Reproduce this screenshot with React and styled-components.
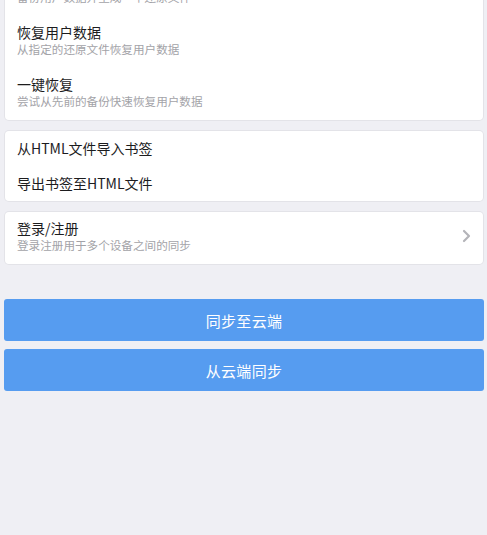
import React from 'react';
import styled, { createGlobalStyle } from 'styled-components';

const GlobalStyle = createGlobalStyle`
  html, body {
    margin: 0;
    padding: 0;
    background: #efeff4;
    font-family: "Noto Sans CJK SC", "Noto Sans", sans-serif;
    -webkit-font-smoothing: antialiased;
  }
`;

// Page is scrolled: the first card starts above the top edge
const Page = styled.div`
  height: 535px;
  overflow: hidden;
  padding: 0 4px 0 5px;
  box-sizing: border-box;
`;

const Scroller = styled.div`
  margin-top: -36px;
  display: flex;
  flex-direction: column;
`;

const Card = styled.section`
  background: #fff;
  box-shadow: 0 0 0 1px #e3e3e8;
  border-radius: 4px;
  margin-bottom: 11px;
`;

const Item = styled.div`
  display: flex;
  align-items: center;
  padding: ${p => (p.single ? '8px 12px 9px' : '7px 12px 11px')};
  min-height: ${p => (p.single ? '18px' : '34px')};
  cursor: pointer;
`;

const ItemText = styled.div`
  flex: 1;
  display: flex;
  flex-direction: column;
`;

const Title = styled.span`
  font-size: 14px;
  line-height: 18px;
  color: #1c1c1e;
`;

const Sub = styled.span`
  margin-top: 1px;
  font-size: 11.6px;
  line-height: 15px;
  color: #a3a3a8;
`;

const Chevron = styled.svg`
  width: 9px;
  height: 14px;
`;

const Buttons = styled.div`
  margin-top: 24px;
  display: flex;
  flex-direction: column;
  gap: 8px;
`;

const Button = styled.button`
  height: 42px;
  margin: 0 -1px;
  border: none;
  border-radius: 3px;
  background: #569cf0;
  color: #fff;
  font-family: inherit;
  font-size: 15px;
  letter-spacing: 0.3px;
  cursor: pointer;
`;

const restore = [
  { title: '备份用户数据', sub: '备份用户数据并生成一个还原文件' },
  { title: '恢复用户数据', sub: '从指定的还原文件恢复用户数据' },
  { title: '一键恢复', sub: '尝试从先前的备份快速恢复用户数据' },
];

const bookmarks = ['从HTML文件导入书签', '导出书签至HTML文件'];

export default function App() {
  return (
    <>
      <GlobalStyle />
      <Page>
        <Scroller>
          <Card>
            {restore.map(r => (
              <Item key={r.title}>
                <ItemText>
                  <Title>{r.title}</Title>
                  <Sub>{r.sub}</Sub>
                </ItemText>
              </Item>
            ))}
          </Card>
          <Card>
            {bookmarks.map(b => (
              <Item single key={b}>
                <ItemText>
                  <Title>{b}</Title>
                </ItemText>
              </Item>
            ))}
          </Card>
          <Card>
            <Item>
              <ItemText>
                <Title>登录/注册</Title>
                <Sub>登录注册用于多个设备之间的同步</Sub>
              </ItemText>
              <Chevron viewBox="0 0 9 14">
                <path d="M2 2l5 5-5 5" fill="none" stroke="#b4b4b9" strokeWidth="2.2" strokeLinecap="round" strokeLinejoin="round" />
              </Chevron>
            </Item>
          </Card>
          <Buttons>
            <Button>同步至云端</Button>
            <Button>从云端同步</Button>
          </Buttons>
        </Scroller>
      </Page>
    </>
  );
}
